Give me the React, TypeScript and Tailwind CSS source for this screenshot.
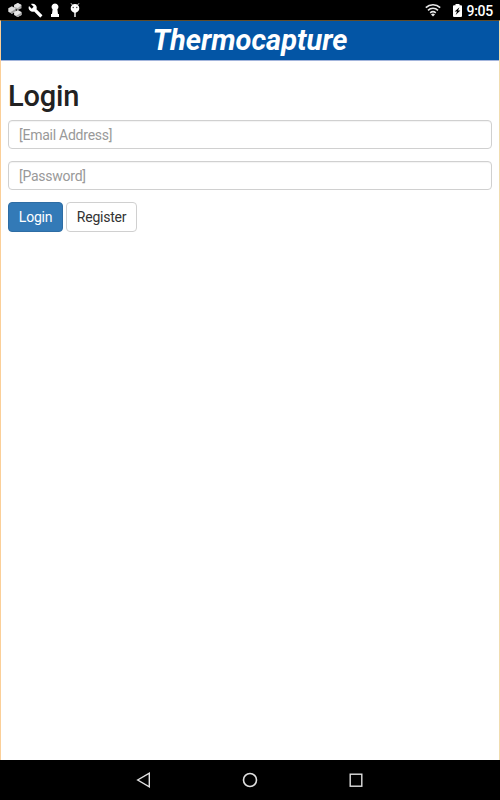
import React from "react";

const HexIcon = () => (
  <svg className="h-[14px] w-[14px]" viewBox="0 0 14 14">
    <path d="M9.800 0l3.700 2v3.200L9.800 7.100 6.100 5.200V2z" fill="#a8a8a8" />
    <path d="M9.800 0l3.700 2-3.700 3-3.700-1V2z" fill="#e2e2e2" />
    <path d="M3.900 3.300l3.600 2v3.500l-3.600 2-3.600-2V5.300z" fill="#dedede" />
    <path d="M7.500 6v2.800l-3.600 2-2-1.200z" fill="#a0a0a0" />
    <path d="M9.800 7.100l3.700 2v3L9.800 14l-3.700-1.900v-3z" fill="#e6e6e6" />
    <path d="M13.500 9.500v2.600L9.800 14l-2-1z" fill="#a8a8a8" />
  </svg>
);

const WrenchIcon = () => (
  <svg className="h-[15px] w-[15px]" viewBox="0 0 24 24" fill="white">
    <path d="M22.700 19l-9.100-9.100c.9-2.300.4-5-1.500-6.900-2-2-5-2.400-7.400-1.300L9 6 6 9 1.600 4.700C.4 7.100.9 10.100 2.900 12.100c1.900 1.900 4.600 2.400 6.900 1.500l9.100 9.100c.4.400 1 .4 1.400 0l2.300-2.300c.5-.4.500-1.100.1-1.400z" />
  </svg>
);

const KeyholeIcon = () => (
  <svg className="h-[14px] w-[8px]" viewBox="0 0 8 14" fill="white">
    <path d="M4 .5a3.400 3.400 0 0 1 2.400 5.800L7 11h1v3H0v-3h1l.6-4.700A3.400 3.400 0 0 1 4 .5z" />
  </svg>
);

const DroidIcon = () => (
  <svg className="h-[14px] w-[10px]" viewBox="0 0 10 14" fill="white">
    <path d="M1 .3l1.600 1.900M9 .3L7.400 2.200" stroke="white" strokeWidth=".9" />
    <path d="M.7 5.200a4.300 4.100 0 0 1 8.600 0Q9.300 8.300 6.200 9.400L5.700 9.800V14H4.300V9.800l-.5-.4Q.7 8.300.7 5.200z" />
    <circle cx="3.200" cy="4.500" r=".65" fill="#333" />
    <circle cx="6.800" cy="4.500" r=".65" fill="#333" />
  </svg>
);

const WifiIcon = () => (
  <svg className="h-[14px] w-[16px]" viewBox="0 0 16 14" fill="none" stroke="#e8e8e8" strokeWidth="1.600">
    <path d="M.8 4.600a10.500 10.500 0 0 1 14.400 0M3 7.300a7.300 7.300 0 0 1 10 0M5.200 9.800a4.200 4.200 0 0 1 5.600 0" />
    <path d="M6 11.400a2.900 2.900 0 0 1 4 0L8 13.600z" fill="#e8e8e8" stroke="none" />
  </svg>
);

const BatteryIcon = () => (
  <svg className="h-[13px] w-[9px]" viewBox="0 0 9 13">
    <path d="M2.500 0h4v1.300H8q1 0 1 1V12q0 1-1 1H1q-1 0-1-1V2.300q0-1 1-1h1.500z" fill="white" />
    <path d="M6.400 3.200L1.700 7.500h2.400l-1.500 3.400 4.800-4.400H5.100z" fill="black" />
  </svg>
);

const StatusBar = () => (
  <div className="flex h-5 shrink-0 items-center bg-black pl-2 pr-[7px] text-white">
    <HexIcon />
    <div className="ml-[6px] flex"><WrenchIcon /></div>
    <div className="ml-2 flex"><KeyholeIcon /></div>
    <div className="ml-[11px] flex"><DroidIcon /></div>
    <div className="ml-auto flex items-center">
      <WifiIcon />
      <div className="ml-[12px] flex"><BatteryIcon /></div>
      <span className="ml-[4px] mt-[2px] text-[14px] font-medium leading-5 tracking-[-0.25px]">9:05</span>
    </div>
  </div>
);

const NavBar = () => (
  <div className="flex h-10 shrink-0 items-center justify-center gap-[91px] bg-black pr-[1px]">
    <svg className="h-4 w-[15px]" viewBox="0 0 15 16" fill="none" stroke="#e0e0e0" strokeWidth="1.400">
      <path d="M13.300 1.200v13.600L1.700 8z" />
    </svg>
    <svg className="h-4 w-4" viewBox="0 0 16 16" fill="none" stroke="#e0e0e0" strokeWidth="1.600">
      <circle cx="8" cy="8" r="6.500" />
    </svg>
    <svg className="h-4 w-[14px]" viewBox="0 0 14 16" fill="none" stroke="#e0e0e0" strokeWidth="1.400">
      <rect x="1.200" y="2.200" width="11.600" height="12" />
    </svg>
  </div>
);

const fieldClass =
  "block h-[29px] w-full rounded-[4px] border border-[#d0d0d0] bg-white px-[10px] text-[14px] tracking-[-0.25px] text-[#555] shadow-[inset_0_1px_1px_rgba(0,0,0,0.05)] outline-none placeholder:text-[#999]";

const App: React.FC = () => {
  return (
    <div className="flex h-[800px] w-[500px] flex-col bg-white font-['Roboto',sans-serif]">
      <StatusBar />
      <main className="flex-1 border-l border-r border-t border-l-[#fbcf98] border-r-[#f0dcb0] border-t-[#614b28]">
        <header className="flex h-[40px] items-center justify-center border-b border-[#a3b5dc] bg-[#0355a5]">
          <h1 className="text-[29px] font-bold italic leading-none text-white">Thermocapture</h1>
        </header>
        <form className="px-[7px]" onSubmit={(e) => e.preventDefault()}>
          <h2 className="mt-[19px] text-[29px] font-medium leading-[32px] tracking-[-0.2px] text-[#222]">Login</h2>
          <input type="email" placeholder="[Email Address]" className={`mt-[8px] ${fieldClass}`} />
          <input type="password" placeholder="[Password]" className={`mt-[12px] ${fieldClass}`} />
          <div className="mt-[12px] flex gap-[3px]">
            <button type="submit" className="h-[30px] w-[55px] rounded-[4px] border border-[#2e6da4] bg-[#337ab7] text-[14px] tracking-[-0.25px] text-white">
              Login
            </button>
            <button type="button" className="h-[30px] w-[71px] rounded-[4px] border border-[#d0d0d0] bg-white text-[14px] tracking-[-0.25px] text-[#333]">
              Register
            </button>
          </div>
        </form>
      </main>
      <NavBar />
    </div>
  );
};

export default App;
